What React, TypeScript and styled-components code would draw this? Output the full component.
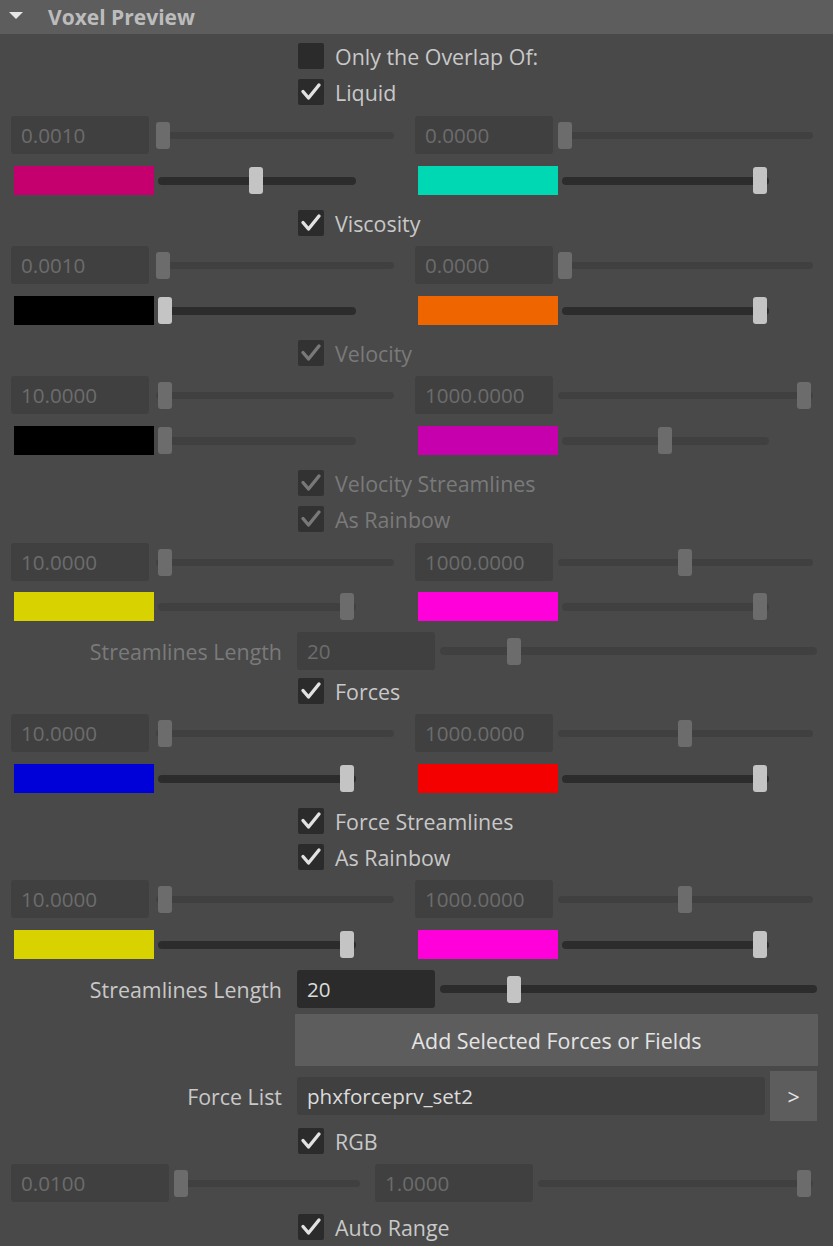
import styled, { createGlobalStyle } from 'styled-components'

const GlobalStyle = createGlobalStyle`
  html, body {
    margin: 0;
    padding: 0;
    background: #494949;
  }
  body {
    font-family: "Open Sans", "Noto Sans", sans-serif;
  }
`

const Panel = styled.div`
  width: 833px;
  height: 1246px;
  overflow: hidden;
  background: #494949;
  color: #c8c8c8;
  font-size: 21.4px;
`

const Header = styled.div`
  height: 34px;
  background: #5d5d5d;
  display: flex;
  align-items: center;
  padding-left: 9px;
  gap: 25px;
`

const Arrow = styled.div`
  width: 0;
  height: 0;
  margin-top: -3px;
  border-left: 7.5px solid transparent;
  border-right: 7.5px solid transparent;
  border-top: 7px solid #e6e6e6;
`

const Title = styled.div`
  font-weight: 700;
  font-size: 21px;
  color: #bcbcbc;
`

const Body = styled.div`
  display: flex;
  flex-direction: column;
`

const CheckRow = styled.div<{ $mt?: number; $off?: boolean }>`
  margin-top: ${p => p.$mt ?? 0}px;
  height: 36px;
  display: flex;
  align-items: center;
  gap: 11px;
  padding-left: 298px;
  color: ${p => (p.$off ? '#7a7a7a' : '#c8c8c8')};
`

const Box = styled.div<{ $off?: boolean }>`
  width: 26px;
  height: 26px;
  border-radius: 2px;
  background: ${p => (p.$off ? '#323232' : '#2b2b2b')};
  display: flex;
  align-items: center;
  justify-content: center;
`

const FieldRow = styled.div<{ $mt?: number; $cols?: string; $gap?: number }>`
  margin-top: ${p => p.$mt ?? 5}px;
  height: 38px;
  display: grid;
  grid-template-columns: ${p => p.$cols ?? '383px 398px'};
  column-gap: ${p => p.$gap ?? 21}px;
  padding-left: 11px;
`

const ColorRow = styled.div<{ $mt?: number }>`
  margin-top: ${p => p.$mt ?? 12}px;
  height: 29px;
  display: grid;
  grid-template-columns: 342px 351px;
  column-gap: 62px;
  padding-left: 14px;
`

const Half = styled.div<{ $gap: number }>`
  display: flex;
  align-items: center;
  gap: ${p => p.$gap}px;
`

const ValueBox = styled.div<{ $w?: number; $active?: boolean }>`
  box-sizing: border-box;
  width: ${p => (p.$w ? `${p.$w}px` : 'auto')};
  flex: ${p => (p.$w ? 'none' : '1')};
  height: 38px;
  border-radius: 3px;
  background: ${p => (p.$active ? '#2b2b2b' : '#404040')};
  color: ${p => (p.$active ? '#dcdcdc' : '#6c6c6c')};
  font-size: 20.6px;
  display: flex;
  align-items: center;
  padding-left: 10px;
`

const Swatch = styled.div<{ $c: string }>`
  width: 140px;
  height: 29px;
  flex: none;
  background: ${p => p.$c};
`

const Track = styled.div<{ $h: number; $bg: string }>`
  position: relative;
  flex: 1;
  height: ${p => p.$h}px;
  border-radius: 4px;
  background: ${p => p.$bg};
`

const Thumb = styled.div<{ $bg: string }>`
  position: absolute;
  top: 50%;
  width: 14px;
  height: 27px;
  margin-top: -13.5px;
  border-radius: 3px;
  background: ${p => p.$bg};
`

const LabelRow = styled.div<{ $mt?: number; $h?: number }>`
  margin-top: ${p => p.$mt ?? 0}px;
  height: ${p => p.$h ?? 38}px;
  display: grid;
  grid-template-columns: 282px 1fr;
  column-gap: 15px;
  align-items: center;
  padding-right: 16px;
`

const Label = styled.div<{ $off?: boolean }>`
  text-align: right;
  color: ${p => (p.$off ? '#7a7a7a' : '#c8c8c8')};
`

const Controls = styled.div<{ $gap: number }>`
  display: flex;
  align-items: center;
  gap: ${p => p.$gap}px;
`

const WideButton = styled.div<{ $mt?: number }>`
  margin: ${p => p.$mt ?? 6}px 15px 0 295px;
  height: 52px;
  background: #5d5d5d;
  color: #e4e4e4;
  display: flex;
  align-items: center;
  justify-content: center;
`

const SmallButton = styled.div`
  width: 47px;
  height: 50px;
  flex: none;
  background: #5d5d5d;
  color: #e4e4e4;
  display: flex;
  align-items: center;
  justify-content: center;
`

function Slider({ at, h = 7, tone = 'field' }: { at: number; h?: number; tone?: 'field' | 'on' | 'off' }) {
  const track = tone === 'on' ? '#2c2c2c' : '#404040'
  const thumb = tone === 'on' ? '#c4c4c4' : '#6c6c6c'
  return (
    <Track $h={h} $bg={track}>
      <Thumb $bg={thumb} style={{ left: `calc(${at} * (100% - 16px))` }} />
    </Track>
  )
}

function Check({ label, checked = true, off, mt }: { label: string; checked?: boolean; off?: boolean; mt?: number }) {
  return (
    <CheckRow $mt={mt} $off={off}>
      <Box $off={off}>
        {checked && (
          <svg width="26" height="26" viewBox="0 0 26 26">
            <polyline
              points="5,12.5 10.5,19 21,6"
              fill="none"
              stroke={off ? '#787878' : '#e2e2e2'}
              strokeWidth="3.4"
              strokeLinecap="round"
              strokeLinejoin="round"
            />
          </svg>
        )}
      </Box>
      <span>{label}</span>
    </CheckRow>
  )
}

function RangePair({ a, b, at, mt }: { a: string; b: string; at: [number, number]; mt?: number }) {
  return (
    <FieldRow $mt={mt}>
      <Half $gap={7}>
        <ValueBox $w={138}>{a}</ValueBox>
        <Slider at={at[0]} />
      </Half>
      <Half $gap={5}>
        <ValueBox $w={138}>{b}</ValueBox>
        <Slider at={at[1]} />
      </Half>
    </FieldRow>
  )
}

function ColorPair({ c, at, off, mt }: { c: [string, string]; at: [number, number]; off?: boolean; mt?: number }) {
  const tone = off ? 'off' : 'on'
  return (
    <ColorRow $mt={mt}>
      <Half $gap={4}>
        <Swatch $c={c[0]} />
        <Slider at={at[0]} h={8} tone={tone} />
      </Half>
      <Half $gap={4}>
        <Swatch $c={c[1]} />
        <Slider at={at[1]} h={8} tone={tone} />
      </Half>
    </ColorRow>
  )
}

function LengthRow({ off, mt }: { off?: boolean; mt?: number }) {
  return (
    <LabelRow $mt={mt}>
      <Label $off={off}>Streamlines Length</Label>
      <Controls $gap={5}>
        <ValueBox $w={138} $active={!off}>20</ValueBox>
        <Slider at={0.185} h={8} tone={off ? 'off' : 'on'} />
      </Controls>
    </LabelRow>
  )
}

export default function App() {
  return (
    <>
      <GlobalStyle />
      <Panel>
        <Header>
          <Arrow />
          <Title>Voxel Preview</Title>
        </Header>
        <Body>
          <Check label="Only the Overlap Of:" checked={false} mt={4} />
          <Check label="Liquid" />
          <RangePair a="0.0010" b="0.0000" at={[0, 0]} mt={6} />
          <ColorPair c={['#c5006e', '#00d7b3']} at={[0.5, 1]} />

          <Check label="Viscosity" mt={10} />
          <RangePair a="0.0010" b="0.0000" at={[0, 0]} />
          <ColorPair c={['#000000', '#ef6500']} at={[0, 1]} />

          <Check label="Velocity" off mt={10} />
          <RangePair a="10.0000" b="1000.0000" at={[0.01, 1]} />
          <ColorPair c={['#000000', '#c700ad']} at={[0, 0.5]} off />

          <Check label="Velocity Streamlines" off mt={10} />
          <Check label="As Rainbow" off />
          <RangePair a="10.0000" b="1000.0000" at={[0.01, 0.5]} mt={6} />
          <ColorPair c={['#d8d200', '#ff00da']} at={[1, 1]} off mt={11} />
          <LengthRow off mt={11} />

          <Check label="Forces" mt={3} />
          <RangePair a="10.0000" b="1000.0000" at={[0.01, 0.5]} />
          <ColorPair c={['#0000d8', '#f50000']} at={[1, 1]} />

          <Check label="Force Streamlines" mt={10} />
          <Check label="As Rainbow" />
          <RangePair a="10.0000" b="1000.0000" at={[0.01, 0.5]} />
          <ColorPair c={['#d8d200', '#ff00da']} at={[1, 1]} />
          <LengthRow mt={11} />

          <WideButton>Add Selected Forces or Fields</WideButton>
          <LabelRow $mt={5} $h={50}>
            <Label>Force List</Label>
            <Controls $gap={5}>
              <ValueBox>
                <span style={{ color: '#dcdcdc' }}>phxforceprv_set2</span>
              </ValueBox>
              <SmallButton>&gt;</SmallButton>
            </Controls>
          </LabelRow>

          <Check label="RGB" mt={2} />
          <FieldRow $cols="349px 438px" $gap={15}>
            <Half $gap={5}>
              <ValueBox $w={158}>0.0100</ValueBox>
              <Slider at={0} />
            </Half>
            <Half $gap={5}>
              <ValueBox $w={158}>1.0000</ValueBox>
              <Slider at={1} />
            </Half>
          </FieldRow>
          <Check label="Auto Range" mt={7} />
        </Body>
      </Panel>
    </>
  )
}
